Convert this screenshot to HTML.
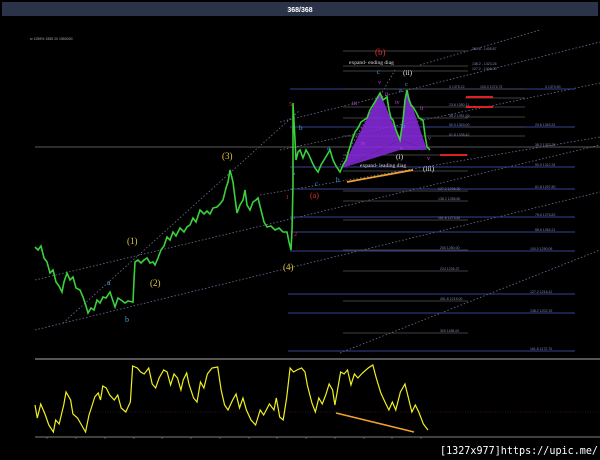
<!DOCTYPE html>
<html><head><meta charset="utf-8"><style>
html,body{margin:0;padding:0;background:#000;width:600px;height:460px;overflow:hidden}
svg{display:block}
</style></head><body>
<svg width="600" height="460" viewBox="0 0 600 460" xmlns="http://www.w3.org/2000/svg" font-family="Liberation Serif, serif">
<rect width="600" height="460" fill="#000"/>
<rect x="2" y="2" width="596" height="14" fill="#2b3349"/>
<text x="300" y="12" fill="#fff" font-family="Liberation Sans, sans-serif" font-size="7" font-weight="bold" text-anchor="middle">368/368</text>
<text x="30" y="40" fill="#aaa" font-family="Liberation Sans, sans-serif" font-size="3.5">w 1255% 1555 20 1550000</text>

<g stroke="#8890c0" stroke-width="0.8" stroke-dasharray="1.5,2" fill="none" opacity="0.8">
<line x1="35" y1="330" x2="600" y2="192"/>
<line x1="35" y1="280" x2="600" y2="145"/>
<line x1="260" y1="195" x2="600" y2="137"/>
<line x1="280" y1="150" x2="600" y2="83"/>
<line x1="280" y1="122" x2="600" y2="42"/>
<line x1="63" y1="323" x2="300" y2="110"/>
<line x1="340" y1="353" x2="600" y2="250"/>
<line x1="420" y1="65" x2="540" y2="30"/>
<line x1="340" y1="165" x2="395" y2="70"/>
</g>

<g stroke="#3a3f90" stroke-width="1">
<line x1="290" y1="89" x2="575" y2="89"/>
<line x1="290" y1="127" x2="575" y2="127"/>
<line x1="290" y1="167" x2="575" y2="167"/>
<line x1="290" y1="189" x2="575" y2="189"/>
<line x1="290" y1="217" x2="575" y2="217"/>
<line x1="290" y1="232" x2="575" y2="232"/>
<line x1="290" y1="251" x2="575" y2="251"/>
<line x1="288" y1="294" x2="575" y2="294"/>
<line x1="288" y1="313" x2="575" y2="313"/>
<line x1="288" y1="351" x2="575" y2="351"/>
</g>
<line x1="35" y1="147" x2="600" y2="147" stroke="#777" stroke-width="0.8"/>
<g stroke="#555" stroke-width="0.8">
<line x1="343" y1="51" x2="468" y2="51"/><line x1="343" y1="66" x2="468" y2="66"/><line x1="343" y1="71" x2="468" y2="71"/>
<line x1="343" y1="89" x2="468" y2="89"/><line x1="343" y1="107" x2="468" y2="107"/><line x1="343" y1="118" x2="468" y2="118"/>
<line x1="343" y1="136" x2="468" y2="136"/><line x1="343" y1="155" x2="468" y2="155"/><line x1="343" y1="171" x2="468" y2="171"/>
<line x1="343" y1="191" x2="468" y2="191"/><line x1="343" y1="201" x2="468" y2="201"/><line x1="343" y1="220" x2="468" y2="220"/>
<line x1="343" y1="250" x2="468" y2="250"/><line x1="343" y1="271" x2="468" y2="271"/><line x1="343" y1="301" x2="468" y2="301"/>
<line x1="343" y1="333" x2="468" y2="333"/>
<line x1="465" y1="89" x2="525" y2="89"/><line x1="465" y1="98" x2="525" y2="98"/><line x1="465" y1="107" x2="525" y2="107"/>
<line x1="465" y1="117" x2="525" y2="117"/><line x1="465" y1="127" x2="525" y2="127"/><line x1="465" y1="136" x2="525" y2="136"/><line x1="465" y1="147" x2="525" y2="147"/>
</g>
<g fill="#8088b0" font-family="Liberation Sans, sans-serif" font-size="3.5">
<text x="472" y="50">261.8 - 1405.87</text><text x="472" y="65">138.2 - 1323.26</text><text x="472" y="70">127.2 - 1306.00</text>
<text x="449" y="88">0 1375.22</text><text x="480" y="88">100.0 1374.73</text><text x="545" y="88">0 1374.90</text>
<text x="449" y="106">23.6 1350.11</text><text x="449" y="117">38.2 1351.29</text><text x="449" y="126">50.0 1343.00</text><text x="449" y="136">61.8 1338.42</text>
<text x="535" y="126">23.6 1343.31</text><text x="535" y="146">38.2 1337.28</text><text x="535" y="166">50.0 1312.34</text>
<text x="535" y="188">61.8 1297.80</text><text x="535" y="216">78.6 1276.82</text><text x="535" y="231">88.6 1264.21</text>
<text x="530" y="250">100.0 1250.09</text><text x="530" y="293">127.2 1216.12</text><text x="530" y="312">138.2 1202.19</text><text x="530" y="350">161.8 1172.70</text>
<text x="438" y="190">127.2 1296.30</text><text x="438" y="200">138.2 1286.80</text><text x="438" y="219">161.8 1273.82</text>
<text x="440" y="249">200 1250.00</text><text x="440" y="270">224 1226.37</text><text x="440" y="300">261.8 1215.00</text><text x="440" y="332">300 1186.00</text>
</g>

<g fill="#8a2be2" opacity="0.85">
<polygon points="342,168 380,93 400,140"/>
<polygon points="400,140 407,90 427,150"/>
<polygon points="342,168 400,140 427,150 400,150"/>
</g>

<polyline fill="none" stroke="#3bd13b" stroke-width="1.6" points="35,247 38,250 41,246 44,258 47,262 50,273 53,270 56,282 59,286 62,292 64,282 67,273 70,280 73,277 76,288 80,290 83,297 86,306 88,313 91,308 94,310 97,300 100,303 103,297 106,298 110,292 112,298 115,307 118,298 121,300 125,303 128,301 133,302 134,280 135,262 138,260 141,263 144,260 147,258 150,263 153,262 155,265 158,258 161,250 164,246 167,237 170,240 173,232 176,236 180,228 184,232 187,227 190,225 193,218 196,222 200,210 204,214 207,211 210,214 213,208 217,207 220,204 223,200 226,188 228,182 230,170 232,178 233,182 235,198 237,213 240,205 243,200 245,190 247,205 250,210 253,202 256,200 258,198 261,210 264,222 267,227 271,226 275,230 279,228 283,232 287,232 289,242 291,250 292,230 293,185 293,103 295,140 296,160 298,152 300,150 303,158 306,150 309,155 312,162 315,168 318,172 321,165 324,160 327,155 330,150 333,160 336,166 340,172 343,165 346,160 349,150 352,140 355,132 358,128 361,122 364,120 367,118 370,110 373,105 376,100 380,93 383,100 387,97 389,110 391,118 393,120 396,130 400,140 403,120 405,100 407,90 409,100 411,105 413,107 416,112 419,118 423,120 425,135 427,147 430,150"/>

<line x1="347" y1="182" x2="413" y2="170" stroke="#f0a030" stroke-width="1.8"/>
<g stroke="#e02020" stroke-width="2"><line x1="466" y1="97" x2="493" y2="97"/><line x1="466" y1="107" x2="493" y2="107"/><line x1="440" y1="155" x2="467" y2="155"/></g>

<g font-size="8">
<text x="375" y="55" fill="#e03030" font-size="9">(b)</text>
<text x="349" y="64" fill="#ddd" font-size="5.5">expand- ending diag</text>
<text x="377" y="74" fill="#40a0e0" font-size="7">c</text>
<text x="403" y="75" fill="#ddd" font-size="7.5">(ii)</text>
<text x="378" y="84" fill="#c040e0" font-size="6">v</text>
<text x="399" y="92" fill="#40a0e0" font-size="6.5">a</text>
<text x="405" y="86" fill="#40a0e0" font-size="6.5">c</text>
<text x="352" y="105" fill="#c040e0" font-size="6">iii</text>
<text x="385" y="96" fill="#c040e0" font-size="6">ii</text>
<text x="395" y="104" fill="#c040e0" font-size="6">iv</text>
<text x="420" y="110" fill="#c040e0" font-size="6">ii</text>
<text x="428" y="140" fill="#c040e0" font-size="6">v</text>
<text x="361" y="145" fill="#c040e0" font-size="6">iv</text>
<text x="402" y="128" fill="#40a0e0" font-size="6.5">b</text>
<text x="400" y="150" fill="#c040e0" font-size="6">v</text>
<text x="396" y="159" fill="#ddd" font-size="7.5">(i)</text>
<text x="427" y="160" fill="#c040e0" font-size="6">v</text>
<text x="360" y="167" fill="#ddd" font-size="5.5">expand- leading diag</text>
<text x="423" y="171" fill="#ddd" font-size="7.5">(iii)</text>
<text x="336" y="182" fill="#40a0e0" font-size="7">b</text>
<text x="315" y="186" fill="#40a0e0" font-size="7">c</text>
<text x="327" y="150" fill="#40a0e0" font-size="7">a</text>
<text x="299" y="130" fill="#40a0e0" font-size="7">b</text>
<text x="293" y="175" fill="#40a0e0" font-size="5">a</text>
<text x="310" y="198" fill="#e03030" font-size="8">(a)</text>
<text x="286" y="199" fill="#e03030" font-size="6">1</text>
<text x="289" y="106" fill="#e03030" font-size="6">5</text>
<text x="294" y="236" fill="#e03030" font-size="6">2</text>
<text x="222" y="159" fill="#e8c840" font-size="9">(3)</text>
<text x="127" y="244" fill="#e8c840" font-size="9">(1)</text>
<text x="150" y="286" fill="#e8c840" font-size="9">(2)</text>
<text x="283" y="270" fill="#e8c840" font-size="9">(4)</text>
<text x="107" y="285" fill="#40a0e0" font-size="8">a</text>
<text x="125" y="322" fill="#40a0e0" font-size="8">b</text>
</g>

<line x1="35" y1="359" x2="600" y2="359" stroke="#aaa" stroke-width="1"/>
<line x1="288" y1="351" x2="575" y2="351" stroke="#3a3f90" stroke-width="1"/>
<line x1="35" y1="437" x2="600" y2="437" stroke="#aaa" stroke-width="0.8"/>
<line x1="35" y1="412" x2="600" y2="412" stroke="#702040" stroke-width="0.6" stroke-dasharray="1,1.5"/>
<g stroke="#888" stroke-width="0.6"><line x1="47" y1="437" x2="47" y2="439"/><line x1="76" y1="437" x2="76" y2="439"/><line x1="105" y1="437" x2="105" y2="439"/><line x1="134" y1="437" x2="134" y2="439"/><line x1="162" y1="437" x2="162" y2="439"/><line x1="191" y1="437" x2="191" y2="439"/><line x1="220" y1="437" x2="220" y2="439"/><line x1="249" y1="437" x2="249" y2="439"/><line x1="277" y1="437" x2="277" y2="439"/><line x1="306" y1="437" x2="306" y2="439"/><line x1="335" y1="437" x2="335" y2="439"/><line x1="364" y1="437" x2="364" y2="439"/><line x1="392" y1="437" x2="392" y2="439"/><line x1="421" y1="437" x2="421" y2="439"/></g>
<g transform="matrix(1.149 0 0 1 -0.62 0)">
<polyline fill="none" stroke="#f0f020" stroke-width="1.2" vector-effect="non-scaling-stroke" points="31,405 33,418 36,404 40,415 43,425 47,432 49,420 52,424 56,405 58,392 62,400 64,414 68,418 72,426 75,432 78,415 80,408 83,397 86,393 88,400 90,386 93,388 96,395 100,400 103,395 106,408 110,412 114,402 116,366 120,368 123,372 126,374 130,368 133,384 136,388 139,378 143,370 146,372 149,385 152,374 155,378 158,390 160,380 163,373 165,384 169,398 172,402 175,382 178,388 181,374 185,368 190,367 193,390 196,405 199,410 203,400 206,394 209,408 212,398 215,410 219,420 223,425 227,410 230,415 235,404 239,410 241,398 244,417 247,420 250,398 253,368 256,372 259,370 263,368 266,372 268,385 272,403 275,412 278,398 281,404 284,395 287,384 290,390 292,405 294,392 297,372 300,374 303,370 306,385 309,374 312,378 316,373 321,368 325,365 328,378 332,393 336,403 339,410 342,402 345,410 349,392 353,384 356,398 359,412 362,405 365,412 369,424 373,430"/>
</g>
<line x1="336" y1="413" x2="414" y2="432" stroke="#f0a030" stroke-width="1.6"/>

<text x="598" y="454" fill="#fff" font-family="DejaVu Sans Mono, Liberation Mono, monospace" font-size="11" text-anchor="end" textLength="158" lengthAdjust="spacingAndGlyphs">[1327x977]https://upic.me/</text>
</svg>
</body></html>
